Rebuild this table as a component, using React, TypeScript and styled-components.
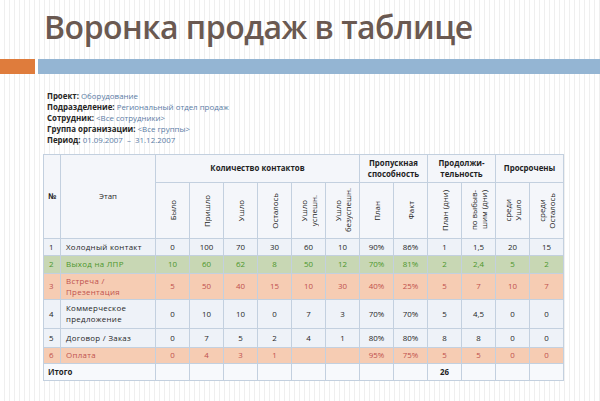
import styled, { createGlobalStyle } from "styled-components";

const GlobalStyle = createGlobalStyle`
  html, body {
    margin: 0;
    padding: 0;
  }
  body {
    width: 600px;
    height: 401px;
    overflow: hidden;
    font-family: "Open Sans", "Noto Sans", sans-serif;
    background: repeating-linear-gradient(
      90deg,
      #ffffff 0px,
      #ffffff 4px,
      #efefef 4px,
      #efefef 5px
    );
  }
`;

const Slide = styled.div`
  width: 600px;
  height: 401px;
  display: flex;
  flex-direction: column;
`;

const Title = styled.h1`
  margin: 0;
  height: 59px;
  padding-left: 44px;
  font-size: 32px;
  line-height: 53px;
  font-weight: 600;
  letter-spacing: -0.5px;
  color: #6a5951;
`;

const Bars = styled.div`
  display: flex;
  gap: 3px;
  height: 15px;
`;

const Bar = styled.div<{ $color: string; $width?: number }>`
  background: ${(p) => p.$color};
  ${(p) => (p.$width ? `width: ${p.$width}px;` : "flex: 1;")}
`;

const Info = styled.div`
  margin-top: 17px;
  padding-left: 47px;
  display: flex;
  flex-direction: column;
  font-size: 7.9px;
  line-height: 11px;
`;

const InfoLine = styled.div`
  color: #5a7ca5;
  b {
    color: #262626;
    font-weight: 700;
  }
`;

const Table = styled.table`
  margin: 8px 0 0 43px;
  width: 520px;
  table-layout: fixed;
  border-collapse: collapse;
  font-size: 7.9px;
  color: #1f1f1f;
  th,
  td {
    border: 1px solid #c3d0df;
    padding: 0;
  }
`;

const HeadRow = styled.tr<{ $h: number }>`
  height: ${(p) => p.$h}px;
  background: #f4f6fa;
`;

const Th = styled.th`
  font-weight: 700;
  text-align: center;
  vertical-align: middle;
  line-height: 11px;
`;

const NumTh = styled(Th)`
  text-align: left;
  padding-left: 4px !important;
`;

const StageTh = styled(Th)`
  font-weight: 400;
`;

const Rotated = styled.div`
  writing-mode: vertical-rl;
  transform: rotate(180deg);
  margin: 0 auto;
  text-align: center;
  font-weight: 400;
  line-height: 10px;
`;

const tones = {
  plain: { bg: "#eef2f8", fg: "#1f1f1f" },
  green: { bg: "#c8d7b4", fg: "#4b962b" },
  salmon: { bg: "#f6ccb3", fg: "#c0504d" },
  white: { bg: "#f7f9fc", fg: "#1f1f1f" },
};

type Tone = keyof typeof tones;

const Row = styled.tr<{ $tone: Tone; $h: number }>`
  height: ${(p) => p.$h}px;
  background: ${(p) => tones[p.$tone].bg};
  color: ${(p) => tones[p.$tone].fg};
`;

const Td = styled.td`
  text-align: center;
  vertical-align: middle;
  line-height: 11px;
`;

const NumTd = styled(Td)`
  text-align: left;
  padding-left: 5px !important;
`;

const StageTd = styled(Td)`
  text-align: left;
  padding-left: 5px !important;
  letter-spacing: 0.3px;
`;

const TotalTd = styled(Td)`
  text-align: left;
  padding-left: 4px !important;
  font-weight: 700;
`;

const BoldTd = styled(Td)`
  font-weight: 700;
`;

const subHeads: string[][] = [
  ["Было"],
  ["Пришло"],
  ["Ушло"],
  ["Осталось"],
  ["Ушло", "успешн."],
  ["Ушло", "безуспешн."],
  ["План"],
  ["Факт"],
  ["План (дни)"],
  ["по выбыв-", "шим (дни)"],
  ["среди", "Ушло"],
  ["среди", "Осталось"],
];

interface IRow {
  n: string;
  stage: string[];
  values: string[];
  tone: Tone;
  h: number;
}

const rows: IRow[] = [
  {
    n: "1",
    stage: ["Холодный контакт"],
    values: ["0", "100", "70", "30", "60", "10", "90%", "86%", "1", "1,5", "20", "15"],
    tone: "plain",
    h: 17,
  },
  {
    n: "2",
    stage: ["Выход на ЛПР"],
    values: ["10", "60", "62", "8", "50", "12", "70%", "81%", "2", "2,4", "5", "2"],
    tone: "green",
    h: 18,
  },
  {
    n: "3",
    stage: ["Встреча /", "Презентация"],
    values: ["5", "50", "40", "15", "10", "30", "40%", "25%", "5", "7", "10", "7"],
    tone: "salmon",
    h: 26,
  },
  {
    n: "4",
    stage: ["Коммерческое", "предложение"],
    values: ["0", "10", "10", "0", "7", "3", "70%", "70%", "5", "4,5", "0", "0"],
    tone: "plain",
    h: 29,
  },
  {
    n: "5",
    stage: ["Договор / Заказ"],
    values: ["0", "7", "5", "2", "4", "1", "80%", "80%", "8", "8", "0", "0"],
    tone: "plain",
    h: 19,
  },
  {
    n: "6",
    stage: ["Оплата"],
    values: ["0", "4", "3", "1", "", "", "95%", "75%", "5", "5", "0", "0"],
    tone: "salmon",
    h: 16,
  },
];

function App() {
  return (
    <>
      <GlobalStyle />
      <Slide>
        <Title>Воронка продаж в таблице</Title>
        <Bars>
          <Bar $color="#df7c3c" $width={35} />
          <Bar $color="#94b5d3" />
        </Bars>
        <Info>
          <InfoLine>
            <b>Проект:</b> Оборудование
          </InfoLine>
          <InfoLine>
            <b>Подразделение:</b> Региональный отдел продаж
          </InfoLine>
          <InfoLine>
            <b>Сотрудник:</b> &lt;Все сотрудники&gt;
          </InfoLine>
          <InfoLine>
            <b>Группа организации:</b> &lt;Все группы&gt;
          </InfoLine>
          <InfoLine>
            <b>Период:</b> 01.09.2007 &nbsp;–&nbsp; 31.12.2007
          </InfoLine>
        </Info>
        <Table>
          <colgroup>
            <col style={{ width: 17 }} />
            <col style={{ width: 95 }} />
            {subHeads.map((_, i) => (
              <col key={i} style={{ width: 34 }} />
            ))}
          </colgroup>
          <thead>
            <HeadRow $h={28}>
              <NumTh rowSpan={2}>№</NumTh>
              <StageTh rowSpan={2}>Этап</StageTh>
              <Th colSpan={6}>Количество контактов</Th>
              <Th colSpan={2}>
                Пропускная
                <br />
                способность
              </Th>
              <Th colSpan={2}>
                Продолжи-
                <br />
                тельность
              </Th>
              <Th colSpan={2}>Просрочены</Th>
            </HeadRow>
            <HeadRow $h={56}>
              {subHeads.map((lines, i) => (
                <Th key={i}>
                  <Rotated>
                    {lines.map((l, j) => (
                      <div key={j}>{l}</div>
                    ))}
                  </Rotated>
                </Th>
              ))}
            </HeadRow>
          </thead>
          <tbody>
            {rows.map((r) => (
              <Row key={r.n} $tone={r.tone} $h={r.h}>
                <NumTd>{r.n}</NumTd>
                <StageTd>
                  {r.stage.map((s, j) => (
                    <div key={j}>{s}</div>
                  ))}
                </StageTd>
                {r.values.map((v, i) => (
                  <Td key={i}>{v}</Td>
                ))}
              </Row>
            ))}
            <Row $tone="white" $h={17}>
              <TotalTd colSpan={2}>Итого</TotalTd>
              {Array.from({ length: 8 }).map((_, i) => (
                <Td key={i} />
              ))}
              <BoldTd>26</BoldTd>
              {Array.from({ length: 3 }).map((_, i) => (
                <Td key={i} />
              ))}
            </Row>
          </tbody>
        </Table>
      </Slide>
    </>
  );
}

export default App;
